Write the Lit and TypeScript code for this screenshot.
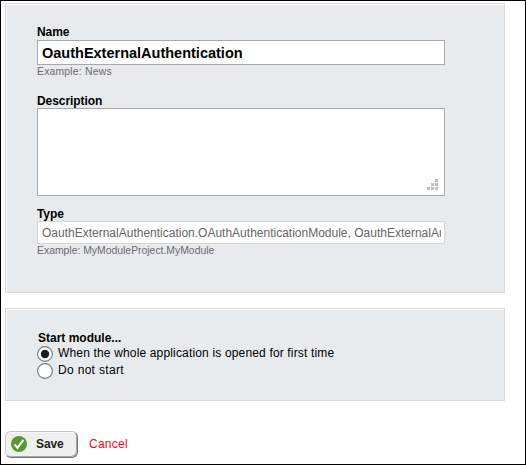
import { LitElement, html, css, svg } from "lit";
import { customElement, state } from "lit/decorators.js";

@customElement("app-root")
export class AppRoot extends LitElement {
  @state() private start = 0;

  static styles = css`
    :host {
      display: block;
      box-sizing: border-box;
      width: 526px;
      height: 465px;
      border: 1px solid #000;
      background: #fff;
      padding: 2px 0 0 4px;
      overflow: hidden;
      font: 12px/15px "Liberation Sans", Arial, sans-serif;
      color: #000;
    }
    * { box-sizing: border-box; }
    .panel {
      width: 500px;
      border: 1px solid #d9d9d9;
      background: #e8ebee;
      box-shadow: inset 1px 1px 0 #fff;
      padding-left: 31px;
    }
    .module { height: 290px; padding-top: 21px; }
    .start { height: 93px; margin-top: 15px; padding-top: 22px; }
    .field { display: flex; flex-direction: column; width: 408px; }
    .description { margin-top: 16px; }
    .kind { margin-top: 11px; }
    .label { font-weight: bold; height: 15px; white-space: nowrap; letter-spacing: -0.07px; }
    .description .label, .kind .label { height: 14px; }
    .start .label { padding-left: 1px; letter-spacing: 0; }
    .box {
      display: block;
      width: 408px;
      background: #fff;
      border: 1px solid #a5a8ad;
      padding: 0 3px 0 4px;
      margin: 0;
      outline: none;
      border-radius: 0;
      font-family: inherit;
    }
    .name { height: 25px; font-size: 14.5px; font-weight: bold; color: #000; }
    .hint { font-size: 10.4px; line-height: 13px; height: 13px; color: #666a72; }
    .news { letter-spacing: 0.2px; }
    .area { position: relative; height: 88px; }
    .grip { position: absolute; right: 6px; bottom: 5px; display: block; }
    .type { height: 23px; font-size: 12px; color: #666; border-color: #d5d6d8; }
    .option { display: flex; height: 17px; gap: 5px; cursor: pointer; letter-spacing: 0.16px; }
    .option:last-child { letter-spacing: 0.32px; }
    .option svg { display: block; flex: none; }
    .option span { line-height: 15px; }
    .actions { display: flex; margin-top: 30px; }
    .save {
      display: flex;
      align-items: flex-start;
      width: 73px;
      height: 27px;
      margin: 0;
      padding: 4px 0 0 5px;
      border: 1px solid;
      border-color: #c4c4c4 #777 #777 #c4c4c4;
      border-radius: 6px;
      background: #efefef;
      box-shadow: inset 1px 1px 0 #fafafa, inset -1px -1px 0 #a8a8a8;
      font: bold 12px/15px "Liberation Sans", Arial, sans-serif;
      letter-spacing: -0.1px;
      color: #222;
      gap: 9px;
    }
    .save span { padding-top: 1px; }
    .cancel { color: #fb0018; margin: 6px 0 0 11px; letter-spacing: 0.25px; }
  `;

  private option(index: number, text: string) {
    return html`<div class="option" role="radio" aria-checked=${this.start === index}
      @click=${() => (this.start = index)}>
      <svg width="16" height="16" viewBox="0 0 16 16">
        <circle cx="8" cy="8" r="7.4" fill="#fff" stroke="#777" stroke-width="1.1"></circle>
        ${this.start === index ? svg`<circle cx="8" cy="8" r="4.2" fill="#1c1c1c"></circle>` : ""}
      </svg>
      <span>${text}</span>
    </div>`;
  }

  render() {
    return html`
      <div class="panel module">
        <div class="field">
          <div class="label">Name</div>
          <input class="box name" .value=${"OauthExternalAuthentication"} />
          <div class="hint news">Example: News</div>
        </div>
        <div class="field description">
          <div class="label">Description</div>
          <div class="box area">
            <svg class="grip" width="11" height="11" fill="#bdbdbd" shape-rendering="crispEdges">
              <path d="M8 0h3v3h-3zM4 4h3v3h-3zM8 4h3v3h-3zM0 8h3v3h-3zM4 8h3v3h-3zM8 8h3v3h-3z"></path>
            </svg>
          </div>
        </div>
        <div class="field kind">
          <div class="label">Type</div>
          <input class="box type" readonly
            .value=${"OauthExternalAuthentication.OAuthAuthenticationModule, OauthExternalAuthentication"} />
          <div class="hint">Example: MyModuleProject.MyModule</div>
        </div>
      </div>
      <div class="panel start">
        <div class="label">Start module...</div>
        ${this.option(0, "When the whole application is opened for first time")}
        ${this.option(1, "Do not start")}
      </div>
      <div class="actions">
        <button class="save">
          <svg width="16" height="16" viewBox="0 0 16 16">
            <circle cx="8" cy="8" r="8" fill="#5e9732"></circle>
            <path d="M3.6 8.4L6.4 11.8L12.4 3.8" fill="none" stroke="#fff" stroke-width="2"></path>
          </svg>
          <span>Save</span>
        </button>
        <a class="cancel">Cancel</a>
      </div>
    `;
  }
}
